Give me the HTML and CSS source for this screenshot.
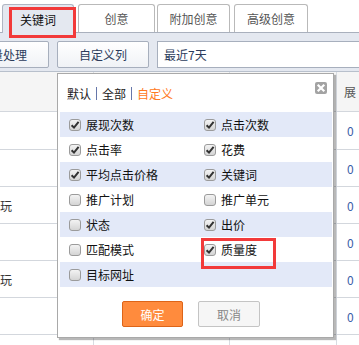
FILE: index.html
```html
<!DOCTYPE html>
<html>
<head>
<meta charset="utf-8">
<link rel="stylesheet" href="styles.css">
</head>
<body>
<div class="page">
  <div class="tabs">
    <div class="tab tab-active">关键词</div>
    <div class="tab tab-2">创意</div>
    <div class="tab tab-3">附加创意</div>
    <div class="tab tab-4">高级创意</div>
  </div>
  <div class="toolbar">
    <div class="btn btn-cut">批量处理</div>
    <div class="btn">自定义列</div>
    <div class="date">最近7天</div>
  </div>
  <div class="table">
    <div class="row thead"><div class="cell"></div><div class="cell"></div><div class="cell"></div><div class="cell num">展</div></div>
    <div class="row first"><div class="cell"></div><div class="cell"></div><div class="cell"></div><div class="cell num zero">0</div></div>
    <div class="row"><div class="cell"></div><div class="cell"></div><div class="cell"></div><div class="cell num zero">0</div></div>
    <div class="row"><div class="cell">玩</div><div class="cell"></div><div class="cell"></div><div class="cell num zero">0</div></div>
    <div class="row"><div class="cell"></div><div class="cell"></div><div class="cell"></div><div class="cell num zero">0</div></div>
    <div class="row"><div class="cell">玩</div><div class="cell"></div><div class="cell"></div><div class="cell num zero">0</div></div>
    <div class="row"><div class="cell"></div><div class="cell"></div><div class="cell"></div><div class="cell num zero">0</div></div>
    <div class="row"><div class="cell"></div><div class="cell"></div><div class="cell"></div><div class="cell num"></div></div>
  </div>

  <div class="popup">
    <div class="popup-head">
      <span>默认</span><i class="bar"></i><span>全部</span><i class="bar"></i><span class="custom">自定义</span>
    </div>
    <div class="close"><svg width="12" height="12" viewBox="0 0 12 12"><path d="M3.5 3.5 L8.5 8.5 M8.5 3.5 L3.5 8.5" stroke="#fff" stroke-width="2.2" stroke-linecap="square"/></svg></div>
    <div class="list">
      <div class="item alt"><span class="cb on"></span>展现次数</div>
      <div class="item alt"><span class="cb on"></span>点击次数</div>
      <div class="item"><span class="cb on"></span>点击率</div>
      <div class="item"><span class="cb on"></span>花费</div>
      <div class="item alt"><span class="cb on"></span>平均点击价格</div>
      <div class="item alt"><span class="cb on"></span>关键词</div>
      <div class="item"><span class="cb"></span>推广计划</div>
      <div class="item"><span class="cb"></span>推广单元</div>
      <div class="item alt"><span class="cb"></span>状态</div>
      <div class="item alt"><span class="cb on"></span>出价</div>
      <div class="item"><span class="cb"></span>匹配模式</div>
      <div class="item"><span class="cb on"></span>质量度</div>
      <div class="item alt"><span class="cb"></span>目标网址</div>
      <div class="item alt"></div>
    </div>
    <div class="actions">
      <div class="pbtn ok">确定</div>
      <div class="pbtn cancel">取消</div>
    </div>
  </div>

  <div class="mark mark-tab"></div>
  <div class="mark mark-item"></div>
</div>
</body>
</html>
```

FILE: styles.css
```css
* { box-sizing: border-box; }
html, body { margin: 0; padding: 0; background: #fff; }
body {
  font-family: "Noto Sans CJK SC", "Noto Sans", sans-serif;
  font-size: 12px;
  color: #222;
}
.page {
  position: relative;
  width: 359px;
  height: 345px;
  overflow: hidden;
}

/* tabs */
.tabs {
  height: 33px;
  display: flex;
  align-items: flex-end;
  border-bottom: 1px solid #a9b0bd;
  padding-left: 2px;
}
.tab {
  height: 28px;
  border: 1px solid #b9b9b9;
  border-bottom: none;
  border-radius: 3px 3px 0 0;
  background: #fff;
  color: #555;
  display: flex;
  align-items: center;
  justify-content: center;
  margin-right: 3px;
}
.tab-active {
  width: 72px;
  background: #e4e8f0;
  color: #111;
  height: 29px;
  margin-bottom: -1px;
  border-color: #b0b6c2;
  margin-right: 4px;
}
.tab-2 { width: 77px; margin-right: 2px; }
.tab-3 { width: 73px; margin-right: 4px; }
.tab-4 { width: 74px; }

/* toolbar */
.toolbar {
  height: 39px;
  background: #e4e8f0;
  border-bottom: 1px solid #b8c0cc;
  display: flex;
  align-items: flex-start;
  padding-top: 8px;
}
.btn {
  height: 27px;
  width: 92px;
  border: 1px solid #a7afbd;
  border-radius: 2px;
  background: linear-gradient(#ffffff, #f0f2f6);
  color: #2c3c5c;
  display: flex;
  align-items: center;
  justify-content: center;
  margin-right: 8px;
}
.btn-cut { margin-left: -43px; }
.date {
  flex: 1;
  height: 27px;
  margin-right: -10px;
  border: 1px solid #a7afbd;
  background: #fff;
  color: #2c3c5c;
  display: flex;
  align-items: center;
  padding-left: 6px;
}

/* table */
.table { display: flex; flex-direction: column; }
.row {
  display: grid;
  grid-template-columns: 94px 136px 107px 1fr;
  height: 37px;
  border-bottom: 1px solid #d3d7dd;
}
.row.first { height: 38px; }
.thead { height: 40px; background: #f5f5f5; color: #666; }
.cell {
  border-right: 1px solid #d8dce2;
  display: flex;
  align-items: center;
  color: #333;
}
.cell:last-child { border-right: none; }
.num { padding-left: 7px; color: #555; }
.zero { color: #3a5ea8; padding-left: 10px; }

/* popup */
.popup {
  position: absolute;
  left: 57px;
  top: 73px;
  width: 277px;
  height: 265px;
  border: 1px solid #a9a9a9;
  background: #fff;
  box-shadow: 2px 2px 1px rgba(0, 0, 0, 0.28);
}
.popup-head {
  height: 38px;
  display: flex;
  align-items: center;
  padding-left: 9px;
  color: #222;
}
.bar {
  display: inline-block;
  width: 1px;
  height: 13px;
  background: #6677aa;
  margin: 0 5px;
}
.custom { color: #ff7a22; }
.close {
  position: absolute;
  left: 257px;
  top: 8px;
  width: 12px;
  height: 12px;
  background: #a3a3a3;
  border-radius: 2px;
  display: flex;
}
.list {
  margin-left: 2px;
  width: 272px;
  display: grid;
  grid-template-columns: 135px 137px;
}
.item {
  height: 25px;
  display: flex;
  align-items: center;
  padding-left: 9px;
  color: #111;
}
.item.alt { background: #e3e9f8; }
.cb {
  width: 12px;
  height: 12px;
  margin-right: 5px;
  border: 1px solid #9b9b9b;
  border-radius: 3px;
  background: linear-gradient(#f3f3f3, #d4d4d4);
  flex: none;
}
.cb.on {
  background:
    url("data:image/svg+xml;utf8,<svg xmlns='http://www.w3.org/2000/svg' width='10' height='10' viewBox='0 0 10 10'><path d='M1.6 5.2 L4 7.6 L8.6 1.8' fill='none' stroke='%23333' stroke-width='2'/></svg>") center / 10px 10px no-repeat,
    linear-gradient(#f3f3f3, #d4d4d4);
}
.actions {
  display: flex;
  margin-top: 14px;
  padding-left: 64px;
}
.pbtn {
  height: 26px;
  display: flex;
  align-items: center;
  justify-content: center;
  border-radius: 2px;
}
.ok {
  width: 61px;
  background: #ff8b3d;
  border: 1px solid #dd6418;
  color: #fff;
}
.cancel {
  width: 62px;
  margin-left: 15px;
  background: #f6f6f6;
  border: 1px solid #c4c4c4;
  color: #888;
}

/* annotation marks */
.mark {
  position: absolute;
  border: 3px solid #f23a3a;
}
.mark-tab { left: 9px; top: 7px; width: 67px; height: 31px; }
.mark-item { left: 201px; top: 238px; width: 75px; height: 31px; }
```
